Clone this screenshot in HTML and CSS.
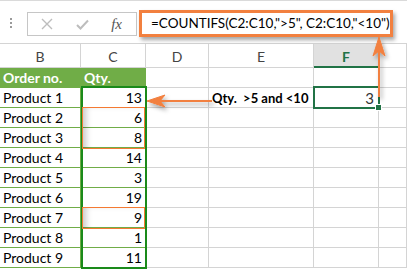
FILE: index.html
```html
<!DOCTYPE html>
<html lang="en">
<head>
  <meta charset="UTF-8">
  <title>COUNTIFS example</title>
  <link rel="stylesheet" href="styles.css">
</head>
<body>
  <div class="toolbar">
    <div class="grip"><span></span><span></span><span></span></div>
    <div class="fx-box">
      <svg width="12" height="12" viewBox="0 0 12 12"><path d="M1 1 L11 11 M11 1 L1 11" stroke="#bdbdbd" stroke-width="1.4" fill="none"/></svg>
      <svg width="13" height="11" viewBox="0 0 13 11"><path d="M1 6 L4.5 9.5 L12 1.5" stroke="#bdbdbd" stroke-width="2" fill="none"/></svg>
      <span class="fx">fx</span>
    </div>
    <div class="formula">=COUNTIFS(C2:C10,"&gt;5", C2:C10,"&lt;10")</div>
  </div>

  <div class="sheet">
    <div class="col-head">B</div>
    <div class="col-head">C</div>
    <div class="col-head">D</div>
    <div class="col-head">E</div>
    <div class="col-head active">F</div>
    <div class="col-head"></div>

    <div class="cell th">Order no.</div>
    <div class="cell th">Qty.</div>
    <div class="cell"></div><div class="cell"></div><div class="cell"></div><div class="cell"></div>
  </div>

  <div class="range"></div>
  <div class="pick" style="top: 107px; height: 42px;"></div>
  <div class="pick" style="top: 207px; height: 22px;"></div>
  <div class="selected"><span></span></div>

  <svg class="arrows" width="407" height="270" viewBox="0 0 407 270">
    <defs>
      <filter id="shadow" x="-20%" y="-20%" width="140%" height="140%">
        <feDropShadow dx="2" dy="3" stdDeviation="2" flood-color="#000" flood-opacity="0.35"/>
      </filter>
    </defs>
    <g filter="url(#shadow)" fill="#f2803f" stroke="#f2803f">
      <line x1="212" y1="101" x2="158" y2="101" stroke-width="2"/>
      <polygon points="147,101 165,95 160,101 165,107" stroke-width="1"/>
      <line x1="379" y1="97" x2="379" y2="50" stroke-width="2"/>
      <polygon points="379,37 373,56 379,51 385,56" stroke-width="1"/>
    </g>
  </svg>

  <script>
    const rows = [
      ["Product 1", 13], ["Product 2", 6], ["Product 3", 8],
      ["Product 4", 14], ["Product 5", 3], ["Product 6", 19],
      ["Product 7", 9], ["Product 8", 1], ["Product 9", 11]
    ];

    const sheet = document.querySelector(".sheet");
    rows.forEach((row, i) => {
      let extra = "";
      if (i == 0) extra = '<div class="cell label">Qty.&nbsp; &gt;5 and &lt;10</div><div class="cell num result">3</div>';
      else extra = '<div class="cell"></div><div class="cell"></div>';
      sheet.insertAdjacentHTML("beforeend", `
        <div class="cell name">${row[0]}</div>
        <div class="cell num qty">${row[1]}</div>
        <div class="cell"></div>
        ${extra}
        <div class="cell"></div>
      `);
    });
  </script>
</body>
</html>
```

FILE: styles.css
```css
body {
  margin: 0;
  width: 407px;
  height: 270px;
  overflow: hidden;
  position: relative;
  background: #fff;
  font-family: Lato, "Open Sans", sans-serif;
  color: #000;
}

.toolbar {
  display: flex;
  align-items: flex-start;
  height: 44px;
  padding-left: 10px;
  border-top: 1px solid #dadada;
  border-bottom: 1px solid #d4d4d4;
  box-sizing: border-box;
}

.grip {
  display: flex;
  flex-direction: column;
  gap: 2px;
  margin-top: 17px;
}

.grip span {
  width: 2px;
  height: 2px;
  background: #9a9a9a;
}

.fx-box {
  margin-top: 11px;
  margin-left: 15px;
  width: 110px;
  height: 24px;
  box-sizing: border-box;
  border: 1px solid #c6c6c6;
  display: flex;
  align-items: center;
  justify-content: space-between;
  padding: 0 14px 0 13px;
}

.fx {
  font-family: "Liberation Serif", serif;
  font-style: italic;
  font-size: 15px;
  color: #555;
}

.formula {
  margin-top: 9px;
  margin-left: 2px;
  width: 254px;
  height: 27px;
  box-sizing: border-box;
  border: 3px solid #f2803f;
  box-shadow: 2px 3px 4px rgba(0, 0, 0, 0.35);
  padding-left: 9px;
  font-size: 13.5px;
  line-height: 21px;
  white-space: nowrap;
  background: #fff;
}

.sheet {
  display: grid;
  grid-template-columns: 81px 65px 63px 105px 65px 28px;
  grid-template-rows: 24px;
  grid-auto-rows: 20px;
}

.col-head {
  border-right: 1px solid #d4d4d4;
  border-bottom: 1px solid #d4d4d4;
  display: flex;
  align-items: center;
  justify-content: center;
  padding-top: 2px;
  font-size: 14px;
  color: #444;
}

.col-head.active {
  background: #e1e1e1;
  color: #217346;
  font-weight: bold;
  border-bottom: 2px solid #217346;
}

.cell {
  border-right: 1px solid #d4d4d4;
  border-bottom: 1px solid #d4d4d4;
  display: flex;
  align-items: center;
  padding: 0 3px;
  font-size: 14px;
  white-space: nowrap;
}

.cell.th {
  background: #70ad47;
  color: #fff;
  font-weight: bold;
  border-right-color: #70ad47;
  border-bottom-color: #70ad47;
}

.cell.name,
.cell.qty {
  border-right-color: #70ad47;
  border-bottom-color: #70ad47;
}

.cell.num {
  justify-content: flex-end;
  padding-right: 3px;
}

.cell.label {
  font-weight: bold;
  font-size: 13px;
  padding-left: 3px;
}

.cell.result {
  color: #333;
  font-size: 15px;
  padding-right: 4px;
}

.range {
  position: absolute;
  z-index: 1;
  left: 81px;
  top: 86px;
  width: 66px;
  height: 183px;
  box-sizing: border-box;
  border: 2px solid #1a8a1a;
}

.pick {
  position: absolute;
  z-index: 2;
  left: 82px;
  width: 63px;
  box-sizing: border-box;
  border-top: 1px solid #f47a32;
  border-bottom: 1px solid #f47a32;
  border-left: 1px solid #f47a32;
  border-right: 1px solid #f47a32;
  box-shadow: inset 7px 1px 6px -4px rgba(0, 0, 0, 0.22);
}

.selected {
  position: absolute;
  z-index: 2;
  left: 313px;
  top: 86px;
  width: 67px;
  height: 23px;
  box-sizing: border-box;
  border: 2px solid #217346;
}

.selected span {
  position: absolute;
  right: -4px;
  bottom: -4px;
  width: 5px;
  height: 5px;
  background: #217346;
  border: 1px solid #fff;
}

.arrows {
  position: absolute;
  z-index: 3;
  left: 0;
  top: 0;
  pointer-events: none;
}
```
